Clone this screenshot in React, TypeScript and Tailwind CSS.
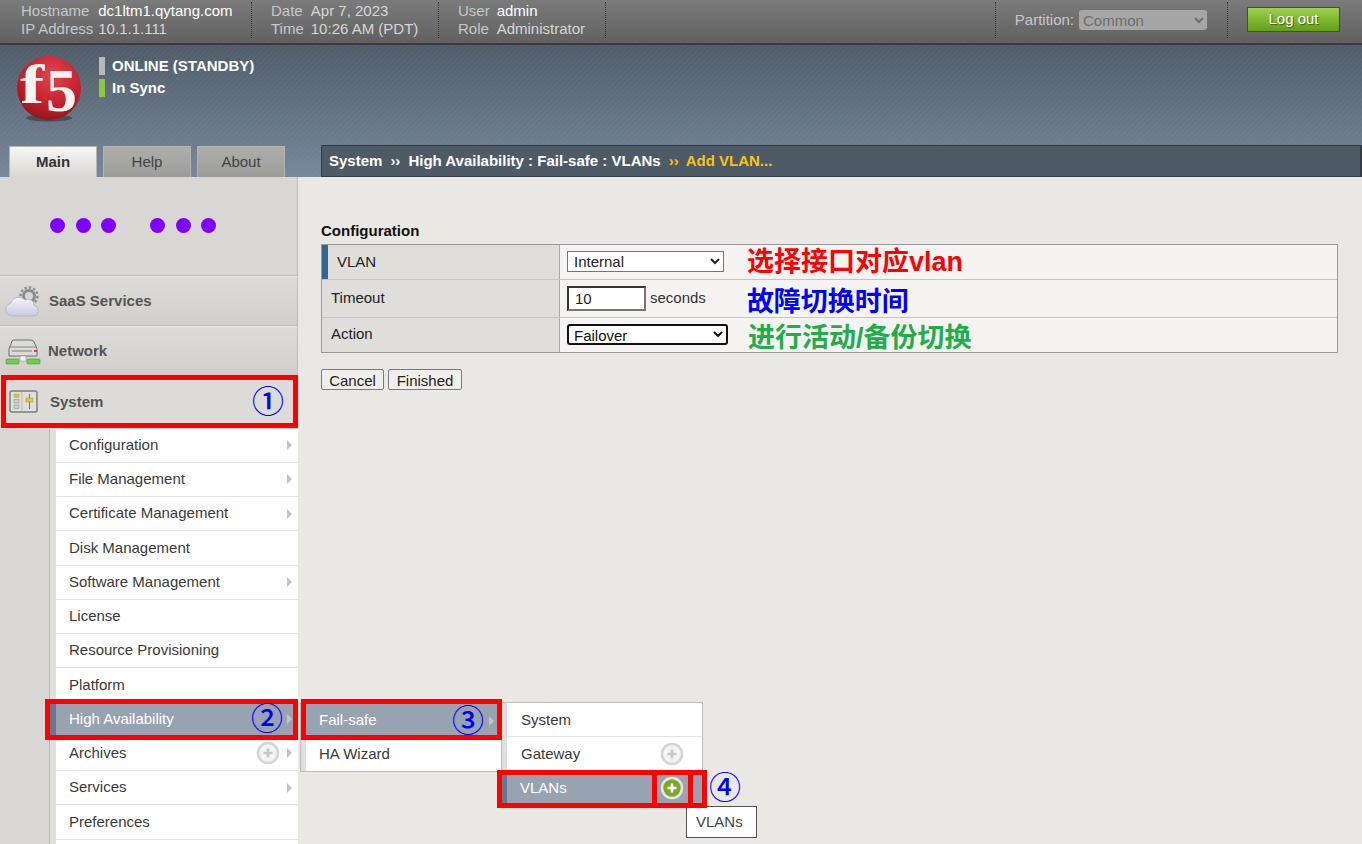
import type { ReactNode } from 'react'

const submenu = [
    { label: 'Configuration', arrow: true },
    { label: 'File Management', arrow: true },
    { label: 'Certificate Management', arrow: true },
    { label: 'Disk Management' },
    { label: 'Software Management', arrow: true },
    { label: 'License' },
    { label: 'Resource Provisioning' },
    { label: 'Platform' },
    { label: 'High Availability', arrow: true, active: true },
    { label: 'Archives', arrow: true, plus: true },
    { label: 'Services', arrow: true },
    { label: 'Preferences' },
    { label: '' },
]

function Arrow() {
    return <span className="h-0 w-0 border-y-[5px] border-l-[5px] border-y-transparent border-l-[#c4c4c4]" />
}

function PlusCircle({ green = false }: { green?: boolean }) {
    return (
        <svg width="24" height="24" viewBox="0 0 24 24">
            <circle cx="12" cy="12" r="10" fill={green ? '#7aa82a' : '#f4f4f4'} stroke={green ? '#e6e8e0' : '#d4d4d4'} strokeWidth="2.5" />
            <path d="M12 7.5v9M7.5 12h9" stroke={green ? '#ffffff' : '#c8c8c8'} strokeWidth="2.6" />
        </svg>
    )
}

function Logo() {
    return (
        <svg width="70" height="70" viewBox="0 0 70 70" className="overflow-visible">
            <defs>
                <radialGradient id="ball" cx="0.55" cy="0.3" r="0.8">
                    <stop offset="0" stopColor="#e0444e" />
                    <stop offset="0.6" stopColor="#c41e2c" />
                    <stop offset="1" stopColor="#7d141c" />
                </radialGradient>
            </defs>
            <ellipse cx="33" cy="60" rx="23" ry="3.5" fill="#39404a" opacity="0.75" />
            <circle cx="33" cy="30" r="32" fill="url(#ball)" />
            <text transform="translate(4 45) scale(1.35 1)" fontFamily="'Liberation Serif', serif" fontWeight="700" fontSize="54" fill="#f6f3f1">f</text>
            <text x="30" y="53" fontFamily="'Liberation Serif', serif" fontWeight="700" fontSize="62" fill="#f6f3f1">5</text>
        </svg>
    )
}

function CloudIcon() {
    return (
        <svg width="36" height="34" viewBox="0 0 36 34">
            <defs>
                <linearGradient id="cloud" x1="0" y1="0" x2="0" y2="1">
                    <stop offset="0" stopColor="#f5f5f8" />
                    <stop offset="1" stopColor="#c9c9e6" />
                </linearGradient>
            </defs>
            <circle cx="24" cy="11" r="5.5" fill="#d8d7d3" stroke="#8b8d8d" strokeWidth="3" />
            <circle cx="24" cy="11" r="8.5" fill="none" stroke="#8b8d8d" strokeWidth="2.4" strokeDasharray="2.4 2" />
            <path d="M7 31a6.500 6.500 0 0 1-1.500-12.800A8.500 8.500 0 0 1 20 15a6 6 0 0 1 9 5.500 5.300 5.300 0 0 1-1 10.500z" fill="url(#cloud)" stroke="#b6b6c4" />
        </svg>
    )
}

function ServerIcon() {
    return (
        <svg width="36" height="28" viewBox="0 0 36 28">
            <path d="M8 2h18q3 0 4 4l2 5v7H4v-7l2-5q1-4 2-4z" fill="#dbdbd8" stroke="#6f6f6a" />
            <path d="M4 9h28" stroke="#86867f" />
            <path d="M7 13h20" stroke="#a9a9a4" strokeWidth="2" />
            <rect x="29" y="12" width="3" height="2" fill="#e23b3b" />
            <rect x="15" y="18" width="6" height="5" fill="#f4f4f4" stroke="#888" strokeWidth="0.5" />
            <rect x="1" y="21" width="13" height="5" rx="1" fill="#6fce4a" stroke="#3f8f2b" strokeWidth="0.5" />
            <rect x="22" y="21" width="13" height="5" rx="1" fill="#6fce4a" stroke="#3f8f2b" strokeWidth="0.5" />
        </svg>
    )
}

function SystemIcon() {
    return (
        <svg width="30" height="24" viewBox="0 0 30 24">
            <rect x="1" y="1" width="27" height="21" rx="2" fill="#e0dfdb" stroke="#7f7f79" strokeWidth="1.5" />
            <path d="M13 2v19" stroke="#b8b8b2" />
            <rect x="5" y="4" width="5" height="3.500" fill="#d9c53a" stroke="#999" strokeWidth="0.5" />
            <rect x="5" y="9.500" width="5" height="3.500" fill="#cfcfca" stroke="#888" strokeWidth="0.5" />
            <rect x="5" y="15" width="5" height="3.500" fill="#cfcfca" stroke="#888" strokeWidth="0.5" />
            <path d="M20.500 4v15" stroke="#77776f" />
            <rect x="17" y="8" width="7" height="4" fill="#e0c83f" stroke="#a59530" strokeWidth="0.5" />
        </svg>
    )
}

function Info({ rows, className }: { rows: [string, string, boolean?][]; className: string }) {
    return (
        <div className={`flex h-[36px] items-center border-r border-dotted border-[#333] ${className}`}>
            <div className="grid grid-cols-[auto_auto] justify-start gap-x-[inherit] leading-[18px]">
                {rows.map(([k, v, bright]) => (
                    <div key={k} className="contents">
                        <span className="text-[#c3c8cc]">{k}</span>
                        <span className={bright ? 'text-white' : 'text-[#d6d6d6]'}>{v}</span>
                    </div>
                ))}
            </div>
        </div>
    )
}

function NavItem({ icon, label, gap }: { icon: ReactNode; label: string; gap: string }) {
    return (
        <div className={`flex h-[50px] shrink-0 items-center border-t border-[#bfbeb9] bg-gradient-to-b from-[#dddcd8] to-[#d0cfcb] pl-[5px] pt-[2px] text-[15px] font-bold text-[#555] shadow-[inset_0_1px_0_#e8e7e3] ${gap}`}>
            {icon}
            <span>{label}</span>
        </div>
    )
}

function Tab({ label, active = false }: { label: string; active?: boolean }) {
    return (
        <div className={`flex h-[31px] w-[88px] items-center justify-center border border-b-0 border-[#b4b4b0] text-[15px] ${active ? 'bg-gradient-to-b from-[#f6f6f4] to-[#d8d7d3] font-bold text-[#333]' : 'bg-gradient-to-b from-[#adadaa] to-[#9c9c98] text-[#444]'}`}>
            {label}
        </div>
    )
}

function Row({ label, height, bar = false, children }: { label: string; height: string; bar?: boolean; children: ReactNode }) {
    return (
        <div className={`flex border-b border-[#c4c4c0] last:border-b-0 ${height}`}>
            <div className={`flex w-[238px] shrink-0 items-center border-r border-[#a9a9a5] bg-[#dfdeda] text-[#222] ${bar ? 'border-l-[6px] border-l-[#35648f] pl-[9px]' : 'pl-[9px]'}`}>
                <span className={bar ? '' : '-mt-px'}>{label}</span>
            </div>
            <div className="flex flex-1 items-center bg-[#f5f4f2] pl-[7px]">{children}</div>
        </div>
    )
}

function Note({ color, children }: { color: string; children: ReactNode }) {
    return <span className={`whitespace-nowrap text-[27px] leading-none font-bold ${color}`}>{children}</span>
}

function RedBox({ className }: { className: string }) {
    return <div className={`pointer-events-none absolute border-[5px] border-[#ff0000] ${className}`} />
}

function Mark({ className, children }: { className: string; children: string }) {
    return <span className={`absolute text-[32px] leading-none font-medium text-[#0000ff] ${className}`}>{children}</span>
}

export default function App() {
    return (
        <div className="relative flex h-[844px] w-[1362px] flex-col overflow-hidden bg-[#e9e8e4] font-['Liberation_Sans','Noto_Sans_CJK_SC',sans-serif] text-[15px]">
            {/* top status bar */}
            <div className="flex h-[45px] shrink-0 items-start border-b-2 border-[#3c3c3c] bg-gradient-to-b from-[#7b7b7b] to-[#616161] pl-[21px] pt-[2px]">
                <Info className="w-[231px] gap-x-[5px]" rows={[['Hostname', 'dc1ltm1.qytang.com', true], ['IP Address', '10.1.1.111']]} />
                <div className="w-[19px]" />
                <Info className="w-[168px] gap-x-[7px]" rows={[['Date', 'Apr 7, 2023'], ['Time', '10:26 AM (PDT)']]} />
                <div className="w-[19px]" />
                <Info className="w-[148px] gap-x-[7px]" rows={[['User', 'admin', true], ['Role', 'Administrator']]} />
                <div className="flex-1" />
                <div className="flex h-[36px] items-center border-x border-dotted border-[#333] pl-[19px] pr-5">
                    <span className="mr-[5px] text-[#c3c8cc]">Partition:</span>
                    <select disabled className="h-5 w-[128px] rounded-[3px] border-0 bg-[#a6a6a6] text-[15px] text-[#6e6e6e] opacity-100">
                        <option>Common</option>
                    </select>
                </div>
                <button className="ml-[19px] mr-[22px] mt-[5px] h-[25px] w-[93px] border border-[#44501f] bg-gradient-to-b from-[#9ed04f] to-[#62a00f] text-[15px] text-white [text-shadow:1px_1px_1px_#3c5a10]">
                    Log out
                </button>
            </div>

            {/* banner with logo, status and tabs */}
            <div className="flex h-[132px] shrink-0 flex-col bg-[image:repeating-linear-gradient(135deg,rgba(255,255,255,0.018)_0,rgba(255,255,255,0.018)_2px,transparent_2px,transparent_4px),linear-gradient(to_bottom,#505c69,#77889b)]">
                <div className="flex h-[100px] shrink-0 pl-[16px] pt-[12px]">
                    <div className="mt-[1px]">
                        <Logo />
                    </div>
                    <div className="ml-[13px] flex flex-col gap-[4px] font-bold text-white">
                        <div className="flex h-[18px] items-center gap-[7px]">
                            <span className="h-[18px] w-[6px] bg-[#b9b9b9]" />
                            ONLINE (STANDBY)
                        </div>
                        <div className="flex h-[18px] items-center gap-[7px]">
                            <span className="h-[18px] w-[6px] bg-[#8fc63f]" />
                            In Sync
                        </div>
                    </div>
                </div>
                <div className="flex flex-1 items-end pl-[9px]">
                    <div className="flex gap-[6px]">
                        <Tab label="Main" active />
                        <Tab label="Help" />
                        <Tab label="About" />
                    </div>
                    <div className="ml-[36px] flex h-[32px] flex-1 items-center gap-2 border border-r-2 border-[#353b42] bg-[#4f5a67] pl-[7px] font-bold text-white">
                        <span>System</span>
                        <span>››</span>
                        <span>High Availability : Fail-safe : VLANs</span>
                        <span className="flex gap-[7px] text-[#f7c511]">
                            <span>››</span>
                            <span>Add VLAN...</span>
                        </span>
                    </div>
                </div>
            </div>

            <div className="flex min-h-0 flex-1">
                {/* left navigation */}
                <aside className="flex w-[298px] shrink-0 flex-col border-r border-[#bdbcb8] bg-[#d8d7d3]">
                    <div className="flex h-[98px] shrink-0 pl-[50px] pt-[41px]">
                        <div className="flex gap-[10.5px]">
                            <span className="h-[15px] w-[15px] rounded-full bg-[#7f00ff]" />
                            <span className="h-[15px] w-[15px] rounded-full bg-[#7f00ff]" />
                            <span className="h-[15px] w-[15px] rounded-full bg-[#7f00ff]" />
                        </div>
                        <div className="ml-[34px] flex gap-[10.5px]">
                            <span className="h-[15px] w-[15px] rounded-full bg-[#7f00ff]" />
                            <span className="h-[15px] w-[15px] rounded-full bg-[#7f00ff]" />
                            <span className="h-[15px] w-[15px] rounded-full bg-[#7f00ff]" />
                        </div>
                    </div>
                    <NavItem icon={<CloudIcon />} label="SaaS Services" gap="gap-[8px]" />
                    <NavItem icon={<ServerIcon />} label="Network" gap="gap-[7px]" />
                    <div className="flex h-[53.6px] shrink-0 items-center gap-[11px] bg-[#dcdbd7] pl-[9px] font-bold text-[#555]">
                        <SystemIcon />
                        <span>System</span>
                    </div>
                    <div className="flex min-h-0 flex-1 flex-col pl-[49px]">
                        <div className="flex flex-col border-l border-[#b9b8b4] bg-[#dfdfdd] pl-[6px]">
                            {submenu.map((item, i) => (
                                <div
                                    key={i}
                                    className={`relative -mr-px flex h-[34.25px] shrink-0 items-center justify-between border-b border-[#e3e3e3] pl-[13px] pr-[6px] ${item.active ? 'bg-[#97a3b1] text-white' : 'bg-white text-[#3a3a3a]'}`}
                                >
                                    {item.active && <span className="absolute -left-[6px] top-0 h-full w-[6px] bg-[#66788a]" />}
                                    <span>{item.label}</span>
                                    <span className="flex items-center gap-[7px]">
                                        {item.plus && <PlusCircle />}
                                        {item.arrow && <Arrow />}
                                    </span>
                                </div>
                            ))}
                        </div>
                    </div>
                </aside>

                {/* configuration form */}
                <main className="flex-1 pl-[23px] pr-[24px] pt-[46px]">
                    <h2 className="mb-[5px] leading-4 font-bold text-[#111]">Configuration</h2>
                    <div className="border border-[#9a9a96]">
                        <Row label="VLAN" height="h-[35px]" bar>
                            <select className="-mt-[2px] h-[21px] w-[157px] shrink-0 border border-[#767676] bg-white pl-[2px] text-[15px] text-[#222]">
                                <option>Internal</option>
                            </select>
                            <Note color="ml-[23px] text-[#ff0000]">选择接口对应vlan</Note>
                        </Row>
                        <Row label="Timeout" height="h-[38px]">
                            <input defaultValue="10" className="h-[25px] w-[79px] shrink-0 border-2 border-t-[#333] border-r-[#777] border-b-[#777] border-l-[#333] bg-white pl-[6px] text-[15px] text-[#222]" />
                            <span className="ml-1 text-[#333]">seconds</span>
                            <Note color="ml-[41px] translate-y-[4px] text-[#0000ff]">故障切换时间</Note>
                        </Row>
                        <Row label="Action" height="h-[34px]">
                            <select className="-mt-[2px] h-[21px] w-[161px] shrink-0 rounded-[3px] border-2 border-[#111] bg-white pl-[1px] text-[15px] text-[#111]">
                                <option>Failover</option>
                            </select>
                            <Note color="ml-[20px] translate-y-[3px] text-[#1fae4b]">进行活动/备份切换</Note>
                        </Row>
                    </div>
                    <div className="mt-[16px] flex gap-1">
                        <button className="h-[21px] w-[63px] rounded-[2px] border border-[#7b7b7b] bg-[#f0efec] text-[15px] text-[#222]">Cancel</button>
                        <button className="h-[21px] w-[74px] rounded-[2px] border border-[#7b7b7b] bg-[#f0efec] text-[15px] text-[#222]">Finished</button>
                    </div>
                </main>
            </div>

            {/* flyout: High Availability */}
            <div className="absolute left-[300px] top-[703px] w-[202px] border border-[#bcbcbc] bg-[#dfdfdd] pl-[5px]">
                <div className="-ml-[5px] flex h-[33px] items-center justify-between border-l-[5px] border-[#66788a] bg-[#97a3b1] pl-[13px] pr-[7px] text-white">
                    <span>Fail-safe</span>
                    <Arrow />
                </div>
                <div className="flex h-[34px] items-center bg-white pl-[13px] text-[#3a3a3a]">HA Wizard</div>
            </div>

            {/* flyout: Fail-safe */}
            <div className="absolute left-[502px] top-[702px] w-[201px] border border-l-0 border-[#bcbcbc] bg-[#dfdfdd] pl-[5px]">
                <div className="flex h-[34px] items-center border-b border-[#e3e3e3] bg-white pl-[14px] pt-[2px] text-[#3a3a3a]">System</div>
                <div className="flex h-[34px] items-center justify-between bg-white pl-[14px] pr-[18px] text-[#3a3a3a]">
                    <span>Gateway</span>
                    <PlusCircle />
                </div>
                <div className="-ml-[5px] flex h-[34px] items-center justify-between border-l-[5px] border-[#66788a] bg-[#97a3b1] pl-[13px] pr-[18px] text-white">
                    <span>VLANs</span>
                    <PlusCircle green />
                </div>
            </div>

            {/* tooltip */}
            <div className="absolute left-[686px] top-[806px] flex h-[32px] w-[71px] items-center border border-[#555] bg-white pl-[9px] text-[#444]">VLANs</div>

            {/* annotations drawn over the screenshot */}
            <RedBox className="left-[1px] top-[375px] h-[53px] w-[297px]" />
            <RedBox className="left-[45px] top-[699px] h-[41px] w-[253px]" />
            <RedBox className="left-[301px] top-[699px] h-[41px] w-[201px]" />
            <RedBox className="left-[497px] top-[770px] h-[38px] w-[160px]" />
            <RedBox className="left-[652px] top-[770px] h-[38px] w-[41px]" />
            <RedBox className="left-[688px] top-[770px] h-[38px] w-[19px]" />
            <Mark className="left-[252px] top-[386px]">①</Mark>
            <Mark className="left-[251px] top-[703px]">②</Mark>
            <Mark className="left-[452px] top-[705px]">③</Mark>
            <Mark className="left-[709px] top-[772px]">④</Mark>
        </div>
    )
}
